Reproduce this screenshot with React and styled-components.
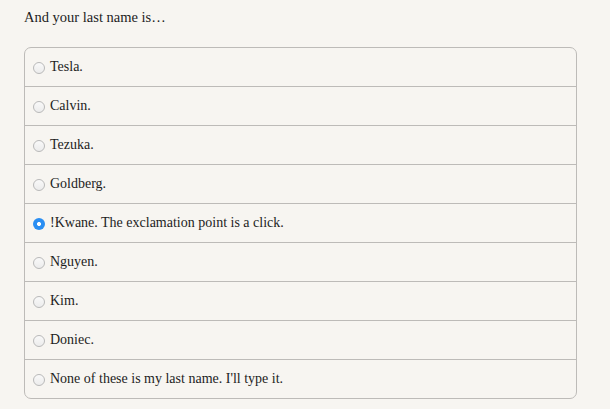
import React, { useState } from "react";
import styled, { createGlobalStyle } from "styled-components";

const GlobalStyle = createGlobalStyle`
  html, body {
    margin: 0;
    padding: 0;
    background: #f7f5f1;
  }
  body {
    font-family: "Liberation Serif", "DejaVu Serif", serif;
    color: #1d1d1d;
  }
`;

const Page = styled.div`
  padding: 8px 33px 0 24px;
`;

const Question = styled.p`
  margin: 0 0 21px 0;
  font-size: 14.5px;
  line-height: 18px;
`;

const OptionList = styled.div`
  border: 1px solid #bdbbb8;
  border-radius: 7px;
  overflow: hidden;
`;

const Option = styled.label`
  display: flex;
  align-items: center;
  gap: 5px;
  height: 38px;
  padding: 0 8px;
  font-size: 14px;
  cursor: pointer;
  & + & {
    border-top: 1px solid #bdbbb8;
  }
`;

const Radio = styled.span`
  box-sizing: border-box;
  width: 12px;
  height: 12px;
  border-radius: 50%;
  flex: none;
  margin-top: 1px;
  border: ${(p) => (p.$checked ? "none" : "1px solid #b9b9b9")};
  background: ${(p) =>
    p.$checked
      ? "radial-gradient(circle, #fff 0 1.7px, #2a8ef2 2.3px)"
      : "linear-gradient(#f9f9f9, #ececec)"};
`;

const names = [
  "Tesla.",
  "Calvin.",
  "Tezuka.",
  "Goldberg.",
  "!Kwane. The exclamation point is a click.",
  "Nguyen.",
  "Kim.",
  "Doniec.",
  "None of these is my last name. I'll type it.",
];

export default function App() {
  const [selected, setSelected] = useState(4);
  return (
    <>
      <GlobalStyle />
      <Page>
        <Question>And your last name is…</Question>
        <OptionList>
          {names.map((name, i) => (
            <Option key={i} onClick={() => setSelected(i)}>
              <Radio $checked={selected === i} />
              {name}
            </Option>
          ))}
        </OptionList>
      </Page>
    </>
  );
}
